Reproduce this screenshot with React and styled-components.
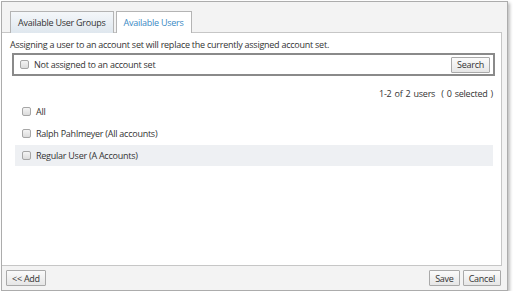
import React from 'react'
import styled, { createGlobalStyle } from 'styled-components'

const GlobalStyle = createGlobalStyle`
  body {
    margin: 0;
    background: #fff;
    font-family: "Open Sans", "Noto Sans", sans-serif;
    letter-spacing: -0.25px;
  }
`

const Frame = styled.div`
  margin: 1px 0 0 1px;
  width: 507px;
  height: 290px;
  box-sizing: border-box;
  border: 1px solid #acacac;
  box-shadow: 2px 2px 3px rgba(0, 0, 0, 0.25);
  background: #f3f3f3;
  display: flex;
  flex-direction: column;
`

const TabBar = styled.div`
  height: 30px;
  display: flex;
  align-items: flex-end;
  gap: 2px;
  padding-left: 8px;
`

const Tab = styled.div`
  height: 22px;
  box-sizing: border-box;
  padding: 0 7px;
  display: flex;
  align-items: center;
  font-size: 9px;
  border: 1px solid #b4b4b4;
  border-bottom: none;
  margin-bottom: -1px;
  position: relative;
  color: ${p => (p.active ? '#3b8ac4' : '#333')};
  background: ${p =>
    p.active ? '#fff' : 'linear-gradient(#f4f7fa, #dfe7ee)'};
`

const Panel = styled.div`
  flex: 1;
  margin-right: 5px;
  background: #fff;
  border: 1px solid #c6c6c6;
  border-left: none;
  padding: 6px 6px 0 8px;
  display: flex;
  flex-direction: column;
`

const Notice = styled.div`
  font-size: 9px;
  color: #333;
  line-height: 12px;
`

const FilterBox = styled.div`
  margin: 2px 0 0 2px;
  height: 23px;
  box-sizing: border-box;
  border: 2px solid #8a8a8a;
  display: flex;
  align-items: center;
  justify-content: space-between;
  padding: 0 3px 0 6px;
`

const Label = styled.label`
  display: flex;
  align-items: center;
  gap: 5px;
  font-size: 9px;
  color: #333;
`

const Box = styled.span`
  width: 9px;
  height: 9px;
  box-sizing: border-box;
  border: 1px solid #a6a6a6;
  border-radius: 2px;
  background: linear-gradient(#f4f4f4, #dcdcdc);
`

const Button = styled.button`
  height: 16px;
  padding: 0 5px;
  font-family: inherit;
  letter-spacing: inherit;
  font-size: 9px;
  color: #333;
  border: 1px solid #a9a9a9;
  background: linear-gradient(#fbfbfb, #e6e6e6);
  border-radius: 1px;
`

const Count = styled.div`
  margin-top: 11px;
  text-align: right;
  font-size: 9px;
  color: #333;
  padding-right: 2px;
  word-spacing: 1px;
`

const List = styled.div`
  margin-top: 1px;
  display: flex;
  flex-direction: column;
  gap: 1px;
`

const Row = styled.div`
  height: 21px;
  display: flex;
  align-items: center;
  padding-left: 7px;
  margin-left: 5px;
  margin-right: 2px;
  background: ${p => (p.highlight ? '#eef0f3' : 'transparent')};
`

const Footer = styled.div`
  height: 24px;
  display: flex;
  align-items: center;
  justify-content: space-between;
  padding: 0 6px 0 4px;
`

const Group = styled.div`
  display: flex;
  gap: 3px;
`

const users = [
  { name: 'All' },
  { name: 'Ralph Pahlmeyer (All accounts)' },
  { name: 'Regular User (A Accounts)', highlight: true },
]

export default function App() {
  return (
    <>
      <GlobalStyle />
      <Frame>
        <TabBar>
          <Tab>Available User Groups</Tab>
          <Tab active>Available Users</Tab>
        </TabBar>
        <Panel>
          <Notice>
            Assigning a user to an account set will replace the currently assigned account set.
          </Notice>
          <FilterBox>
            <Label>
              <Box />
              Not assigned to an account set
            </Label>
            <Button>Search</Button>
          </FilterBox>
          <Count>1-2 of 2 users &nbsp;( 0 selected )</Count>
          <List>
            {users.map(u => (
              <Row key={u.name} highlight={u.highlight}>
                <Label>
                  <Box />
                  {u.name}
                </Label>
              </Row>
            ))}
          </List>
        </Panel>
        <Footer>
          <Button>&lt;&lt; Add</Button>
          <Group>
            <Button>Save</Button>
            <Button>Cancel</Button>
          </Group>
        </Footer>
      </Frame>
    </>
  )
}
